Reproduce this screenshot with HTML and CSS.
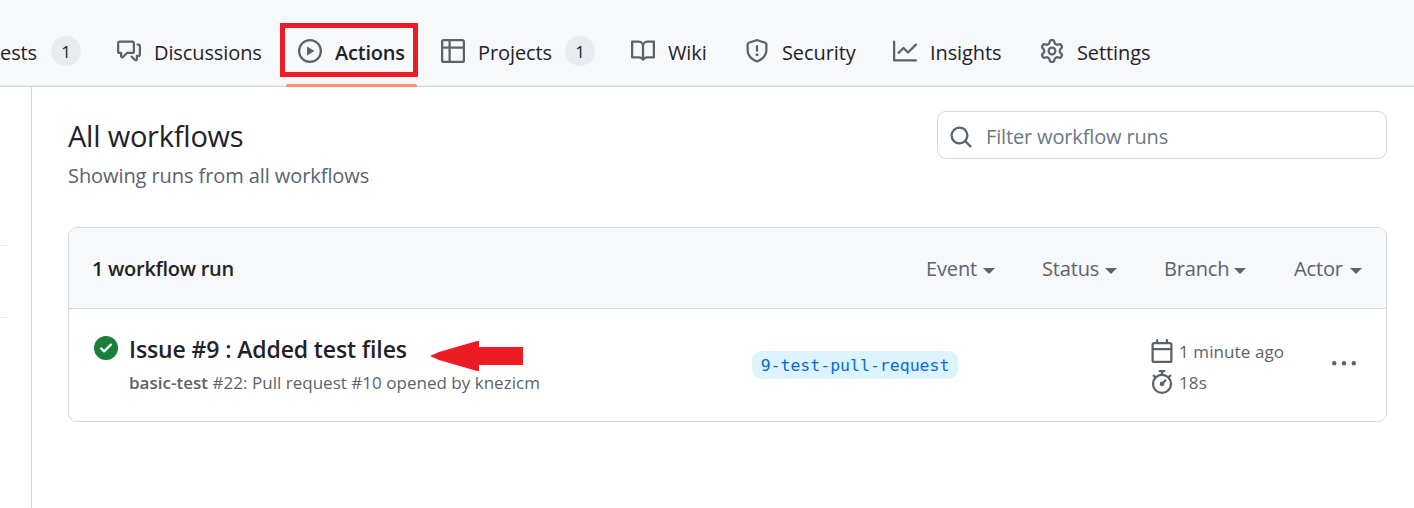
FILE: index.html
```html
<!DOCTYPE html>
<html lang="en">
<head>
<meta charset="utf-8">
<title>Workflow runs</title>
<link rel="stylesheet" href="styles.css">
</head>
<body>
<header class="topbar">
  <nav class="tabs">
    <a class="tab tab-requests"><span class="label w-requests">ests</span><span class="counter">1</span></a>
    <a class="tab"><svg class="icon" viewBox="0 0 16 16"><path d="M1.75 1h8.5c.966 0 1.75.784 1.75 1.75v5.5A1.75 1.75 0 0 1 10.25 10H7.061l-2.574 2.573A1.458 1.458 0 0 1 2 11.543V10h-.25A1.75 1.75 0 0 1 0 8.25v-5.5C0 1.784.784 1 1.75 1ZM1.5 2.75v5.5c0 .138.112.25.25.25h1a.75.75 0 0 1 .75.75v2.19l2.72-2.72a.749.749 0 0 1 .53-.22h3.5a.25.25 0 0 0 .25-.25v-5.5a.25.25 0 0 0-.25-.25h-8.5a.25.25 0 0 0-.25.25Zm13 2a.25.25 0 0 0-.25-.25h-.5a.75.75 0 0 1 0-1.5h.5c.966 0 1.75.784 1.75 1.75v5.5A1.75 1.75 0 0 1 14.25 12H14v1.543a1.458 1.458 0 0 1-2.487 1.03L9.22 12.28a.749.749 0 0 1 .326-1.275.749.749 0 0 1 .734.215l2.22 2.22v-2.19a.75.75 0 0 1 .75-.75h1a.25.25 0 0 0 .25-.25Z"/></svg><span class="label w-discussions">Discussions</span></a>
    <a class="tab tab-current"><svg class="icon" viewBox="0 0 16 16"><path d="M8 0a8 8 0 1 1 0 16A8 8 0 0 1 8 0ZM1.5 8a6.5 6.5 0 1 0 13 0 6.5 6.5 0 0 0-13 0Zm4.879-2.773 4.264 2.559a.25.25 0 0 1 0 .428l-4.264 2.559A.25.25 0 0 1 6 10.559V5.442a.25.25 0 0 1 .379-.215Z"/></svg><span class="label w-actions">Actions</span><span class="highlight"></span></a>
    <a class="tab"><svg class="icon" viewBox="0 0 16 16"><path d="M0 1.75C0 .784.784 0 1.75 0h12.5C15.216 0 16 .784 16 1.75v12.5A1.75 1.75 0 0 1 14.25 16H1.75A1.75 1.75 0 0 1 0 14.25ZM6.5 6.5v8h7.75a.25.25 0 0 0 .25-.25V6.5Zm8-1.5V1.75a.25.25 0 0 0-.25-.25H6.5V5Zm-13 1.5v7.75c0 .138.112.25.25.25H5v-8ZM5 5V1.5H1.75a.25.25 0 0 0-.25.25V5Z"/></svg><span class="label w-projects">Projects</span><span class="counter">1</span></a>
    <a class="tab"><svg class="icon" viewBox="0 0 16 16"><path d="M0 1.75A.75.75 0 0 1 .75 1h4.253c1.227 0 2.317.59 3 1.501A3.743 3.743 0 0 1 11.006 1h4.245a.75.75 0 0 1 .75.75v10.5a.75.75 0 0 1-.75.75h-4.507a2.25 2.25 0 0 0-1.591.659l-.622.621a.75.75 0 0 1-1.06 0l-.622-.621A2.25 2.25 0 0 0 5.258 13H.75a.75.75 0 0 1-.75-.75Zm7.251 10.324.004-5.073-.002-2.253A2.25 2.25 0 0 0 5.003 2.5H1.5v9h3.757a3.75 3.75 0 0 1 1.994.574ZM8.755 4.75l-.004 7.322a3.752 3.752 0 0 1 1.992-.572H14.5v-9h-3.495a2.25 2.25 0 0 0-2.25 2.25Z"/></svg><span class="label w-wiki">Wiki</span></a>
    <a class="tab"><svg class="icon" viewBox="0 0 16 16"><path d="M7.467.133a1.748 1.748 0 0 1 1.066 0l5.25 1.68A1.75 1.75 0 0 1 15 3.48V7c0 1.566-.32 3.182-1.303 4.682-.983 1.498-2.585 2.813-5.032 3.855a1.697 1.697 0 0 1-1.33 0c-2.447-1.042-4.049-2.357-5.032-3.855C1.32 10.182 1 8.566 1 7V3.48a1.75 1.75 0 0 1 1.217-1.667Zm.61 1.429a.25.25 0 0 0-.153 0l-5.25 1.68a.25.25 0 0 0-.174.238V7c0 1.358.275 2.666 1.057 3.86.784 1.194 2.121 2.34 4.366 3.297a.196.196 0 0 0 .154 0c2.245-.956 3.582-2.104 4.366-3.298C13.225 9.666 13.5 8.36 13.5 7V3.48a.251.251 0 0 0-.174-.237l-5.25-1.68ZM8.75 4.75v3a.75.75 0 0 1-1.5 0v-3a.75.75 0 0 1 1.5 0ZM9 10.5a1 1 0 1 1-2 0 1 1 0 0 1 2 0Z"/></svg><span class="label w-security">Security</span></a>
    <a class="tab"><svg class="icon" viewBox="0 0 16 16"><path d="M1.5 1.75V13.5h13.75a.75.75 0 0 1 0 1.5H.75a.75.75 0 0 1-.75-.75V1.75a.75.75 0 0 1 1.5 0Zm14.28 2.53-5.25 5.25a.75.75 0 0 1-1.06 0L7 7.06 4.28 9.78a.751.751 0 0 1-1.042-.018.751.751 0 0 1-.018-1.042l3.25-3.25a.75.75 0 0 1 1.06 0L10 7.94l4.72-4.72a.751.751 0 0 1 1.042.018.751.751 0 0 1 .018 1.042Z"/></svg><span class="label w-insights">Insights</span></a>
    <a class="tab"><svg class="icon" viewBox="0 0 16 16"><path d="M8 0a8.2 8.2 0 0 1 .701.031C9.444.095 9.99.645 10.16 1.29l.288 1.107c.018.066.079.158.212.224.231.114.454.243.668.386.123.082.233.09.299.071l1.103-.303c.644-.176 1.392.021 1.82.63.27.385.506.792.704 1.218.315.675.111 1.422-.364 1.891l-.814.806c-.049.048-.098.147-.088.294.016.257.016.515 0 .772-.01.147.038.246.088.294l.814.806c.475.469.679 1.216.364 1.891a7.977 7.977 0 0 1-.704 1.217c-.428.61-1.176.807-1.82.63l-1.102-.302c-.067-.019-.177-.011-.3.071a5.909 5.909 0 0 1-.668.386c-.133.066-.194.158-.211.224l-.29 1.106c-.168.646-.715 1.196-1.458 1.26a8.006 8.006 0 0 1-1.402 0c-.743-.064-1.289-.614-1.458-1.26l-.289-1.106c-.018-.066-.079-.158-.212-.224a5.738 5.738 0 0 1-.668-.386c-.123-.082-.233-.09-.299-.071l-1.103.303c-.644.176-1.392-.021-1.82-.63a8.12 8.12 0 0 1-.704-1.218c-.315-.675-.111-1.422.363-1.891l.815-.806c.05-.048.098-.147.088-.294a6.214 6.214 0 0 1 0-.772c.01-.147-.038-.246-.088-.294l-.815-.806C.635 6.045.431 5.298.746 4.623a7.92 7.92 0 0 1 .704-1.217c.428-.61 1.176-.807 1.82-.63l1.102.302c.067.019.177.011.3-.071.214-.143.437-.272.668-.386.133-.066.194-.158.211-.224l.29-1.106C6.009.645 6.556.095 7.299.03 7.53.01 7.764 0 8 0Zm-.571 1.525c-.036.003-.108.036-.137.146l-.289 1.105c-.147.561-.549.967-.998 1.189-.173.086-.34.183-.5.29-.417.278-.97.423-1.529.27l-1.103-.303c-.109-.03-.175.016-.195.045-.22.312-.412.644-.573.99-.014.031-.021.11.059.19l.815.806c.411.406.562.957.53 1.456a4.709 4.709 0 0 0 0 .582c.032.499-.119 1.05-.53 1.456l-.815.806c-.081.08-.073.159-.059.19.162.346.353.677.573.989.02.03.085.076.195.046l1.102-.303c.56-.153 1.113-.008 1.53.27.161.107.328.204.501.29.447.222.85.629.997 1.189l.289 1.105c.029.109.101.143.137.146a6.6 6.6 0 0 0 1.142 0c.036-.003.108-.036.137-.146l.289-1.105c.147-.561.549-.967.998-1.189.173-.086.34-.183.5-.29.417-.278.97-.423 1.529-.27l1.103.303c.109.029.175-.016.195-.045.22-.313.411-.644.573-.99.014-.031.021-.11-.059-.19l-.815-.806c-.411-.406-.562-.957-.53-1.456a4.709 4.709 0 0 0 0-.582c-.032-.499.119-1.05.53-1.456l.815-.806c.081-.08.073-.159.059-.19a6.464 6.464 0 0 0-.573-.989c-.02-.03-.085-.076-.195-.046l-1.102.303c-.56.153-1.113.008-1.53-.27a4.44 4.44 0 0 0-.501-.29c-.447-.222-.85-.629-.997-1.189l-.289-1.105c-.029-.11-.101-.143-.137-.146a6.6 6.6 0 0 0-1.142 0ZM11 8a3 3 0 1 1-6 0 3 3 0 0 1 6 0ZM9.5 8a1.5 1.5 0 1 0-3.001.001A1.5 1.5 0 0 0 9.5 8Z"/></svg><span class="label w-settings">Settings</span></a>
  </nav>
</header>
<div class="layout">
  <aside class="sidebar"><div class="divider"></div><div class="divider"></div></aside>
  <main class="main">
    <div class="page-head">
      <div class="headings">
        <h1 class="title">All workflows</h1>
        <p class="subtitle">Showing runs from all workflows</p>
      </div>
      <div class="search">
        <svg class="icon" viewBox="0 0 16 16"><path d="M10.68 11.74a6 6 0 0 1-7.922-8.982 6 6 0 0 1 8.982 7.922l3.04 3.04a.749.749 0 0 1-.326 1.275.749.749 0 0 1-.734-.215ZM11.5 7a4.499 4.499 0 1 0-8.997 0A4.499 4.499 0 0 0 11.5 7Z"/></svg>
        <span class="placeholder">Filter workflow runs</span>
      </div>
    </div>
    <section class="card">
      <div class="card-head">
        <strong class="count">1 workflow run</strong>
        <div class="filters">
          <span class="filter"><span class="f-event">Event</span><i class="caret"></i></span>
          <span class="filter"><span class="f-status">Status</span><i class="caret"></i></span>
          <span class="filter"><span class="f-branch">Branch</span><i class="caret"></i></span>
          <span class="filter"><span class="f-actor">Actor</span><i class="caret"></i></span>
        </div>
      </div>
      <div class="run">
        <svg class="icon success" viewBox="0 0 16 16"><path d="M8 16A8 8 0 1 1 8 0a8 8 0 0 1 0 16Zm3.78-9.72a.751.751 0 0 0-.018-1.042.751.751 0 0 0-1.042-.018L6.75 9.19 5.28 7.72a.751.751 0 0 0-1.042.018.751.751 0 0 0-.018 1.042l2 2a.75.75 0 0 0 1.06 0Z"/></svg>
        <div class="run-text">
          <div class="run-title"><span class="run-name">Issue #9 : Added test files</span><svg class="arrow" viewBox="0 0 94 30"><path d="M0 15 9 11 47 0H49V6H93V24H49V30H47L9 19Z"/></svg></div>
          <div class="run-meta"><b class="wf">basic-test</b> <span class="desc">#22: Pull request #10 opened by knezicm</span></div>
        </div>
        <div class="branch-cell"><span class="branch">9-test-pull-request</span></div>
        <div class="times">
          <div class="time"><svg class="icon" viewBox="0 0 16 16"><path d="M4.75 0a.75.75 0 0 1 .75.75V2h5V.75a.75.75 0 0 1 1.5 0V2h1.25c.966 0 1.75.784 1.75 1.75v10.5A1.75 1.75 0 0 1 13.25 16H2.75A1.75 1.75 0 0 1 1 14.25V3.75C1 2.784 1.784 2 2.75 2H4V.75A.75.75 0 0 1 4.75 0ZM2.5 7.5v6.75c0 .138.112.25.25.25h10.5a.25.25 0 0 0 .25-.25V7.5Zm10.75-4H2.75a.25.25 0 0 0-.25.25V6h11V3.75a.25.25 0 0 0-.25-.25Z"/></svg><span class="ago">1 minute ago</span></div>
          <div class="time"><svg class="icon" viewBox="0 0 16 16"><path d="M5.75.75A.75.75 0 0 1 6.5 0h3a.75.75 0 0 1 0 1.5h-.75v1l-.001.041a6.724 6.724 0 0 1 3.464 1.435l.007-.006.75-.75a.749.749 0 0 1 1.275.326.749.749 0 0 1-.215.734l-.75.75-.006.007a6.75 6.75 0 1 1-10.548 0L2.72 5.03l-.75-.75a.751.751 0 0 1 .018-1.042.751.751 0 0 1 1.042-.018l.75.75.007.006A6.72 6.72 0 0 1 7.25 2.541V1.5H6.5a.75.75 0 0 1-.75-.75ZM8 14.5a5.25 5.25 0 1 0-.001-10.501A5.25 5.25 0 0 0 8 14.5Zm.389-6.7 1.33-1.33a.75.75 0 1 1 1.061 1.06L9.45 8.861A1.503 1.503 0 0 1 8 10.75a1.499 1.499 0 1 1 .389-2.95Z"/></svg><span class="dur">18s</span></div>
        </div>
        <svg class="icon kebab" viewBox="0 0 16 16"><path d="M8 9a1.5 1.5 0 1 0 0-3 1.5 1.5 0 0 0 0 3ZM1.5 9a1.5 1.5 0 1 0 0-3 1.5 1.5 0 0 0 0 3Zm13 0a1.5 1.5 0 1 0 0-3 1.5 1.5 0 0 0 0 3Z"/></svg>
      </div>
    </section>
  </main>
</div>
</body>
</html>
```
FILE: styles.css
```css
* { box-sizing: border-box; }
body {
  margin: 0;
  width: 1414px;
  height: 508px;
  overflow: hidden;
  display: flex;
  flex-direction: column;
  background: #fff;
  color: #1f2328;
  font: 20px/30px "Open Sans", "Noto Sans", sans-serif;
  white-space: nowrap;
}
.icon { width: 24px; height: 24px; fill: #59636e; flex: none; display: block; }

.topbar {
  height: 87px;
  flex: none;
  background: #f6f8fa;
  border-bottom: 1px solid #d1d9e0;
  box-shadow: inset 0 -1px 0 #e9edf1;
}
.tabs { display: flex; gap: 12px; height: 87px; padding-top: 15px; }
.tab { display: flex; align-items: center; gap: 13px; padding: 0 12px; height: 72px; flex: none; position: relative; }
.label { padding-top: 3px; letter-spacing: -0.1px; }
.tab-requests { padding-left: 0; }
.tab-current::after { content: ""; position: absolute; left: 0; right: 0; bottom: 0; height: 3px; border-radius: 2px 2px 0 0; background: #fd8c73; }
.tab-current .label { font-weight: 600; letter-spacing: -0.2px; }
.counter {
  width: 30px;
  height: 30px;
  border-radius: 15px;
  background: #e8ebf0;
  font-size: 17px;
  font-weight: 500;
  line-height: 31px;
  text-align: center;
}
.highlight { position: absolute; left: -6px; top: 8px; width: 138px; height: 54px; border: 5px solid #ed1c24; }
.w-requests { width: 38px; }
.w-discussions { width: 108px; }
.w-actions { width: 70px; }
.w-projects { width: 74px; }
.w-wiki { width: 41px; }
.w-security { width: 75px; }
.w-insights { width: 74px; }
.w-settings { width: 76px; }

.layout { display: flex; flex: 1; }
.sidebar { width: 32px; border-right: 1px solid #d1d9e0; padding-top: 158px; display: flex; flex-direction: column; gap: 71px; }
.divider { width: 7px; height: 1px; background: #e6eaef; }
.main { flex: 1; padding: 24px 27px 0 36px; }

.page-head { display: flex; justify-content: space-between; height: 116px; }
.title { margin: 4px 0 0; font-size: 29px; font-weight: 400; line-height: 42px; letter-spacing: -0.22px; }
.subtitle { margin: 4px 0 0; color: #59636e; letter-spacing: -0.08px; }
.search { width: 450px; height: 48px; border: 1px solid #d1d9e0; border-radius: 9px; display: flex; align-items: center; padding-left: 11px; gap: 13px; }
.search .icon { margin-top: 3px; }
.placeholder { color: #6e7781; letter-spacing: -0.15px; padding-top: 3px; }

.card { height: 195px; border: 1px solid #d1d9e0; border-radius: 9px; overflow: hidden; }
.card-head { height: 81px; background: #f6f8fa; border-bottom: 1px solid #d1d9e0; display: flex; align-items: center; justify-content: space-between; padding: 2px 24px 0 23px; }
.count { font-weight: 600; letter-spacing: -0.28px; }
.filters { display: flex; gap: 47px; color: #59636e; letter-spacing: -0.15px; }
.filter { display: flex; align-items: center; gap: 6px; }
.caret { border: 6px solid transparent; border-top-color: #59636e; border-bottom: 0; margin-top: 3px; }
.f-event { width: 51px; }
.f-status { width: 57px; }
.f-branch { width: 64px; }
.f-actor { width: 51px; padding-left: 1px; }

.run { display: flex; padding: 27px 24px 0 25px; }
.success { fill: #1a7f37; }
.run-text { width: 622px; padding-left: 11px; margin-top: -5px; }
.run-title { display: flex; font-size: 23px; font-weight: 600; line-height: 36px; height: 37px; letter-spacing: -0.12px; }
.run-name { width: 301px; }
.arrow { width: 94px; height: 30px; fill: #ed1c24; margin-top: 10px; }
.run-meta { font-size: 17px; line-height: 30px; color: #59636e; letter-spacing: 0.02px; }
.wf { font-weight: 600; }
.branch-cell { width: 410px; padding-top: 15px; padding-left: 12px; }
.branch { display: block; width: 206px; height: 28px; border-radius: 9px; background: #ddf4ff; color: #0969da; font: 16.5px/29px "DejaVu Sans Mono", monospace; text-align: center; }
.times { width: 182px; padding-top: 3px; font-size: 17px; line-height: 26px; color: #59636e; display: flex; flex-direction: column; gap: 7px; }
.time { display: flex; gap: 5px; height: 24px; letter-spacing: 0.1px; }
.kebab { margin-top: 16px; }
```
